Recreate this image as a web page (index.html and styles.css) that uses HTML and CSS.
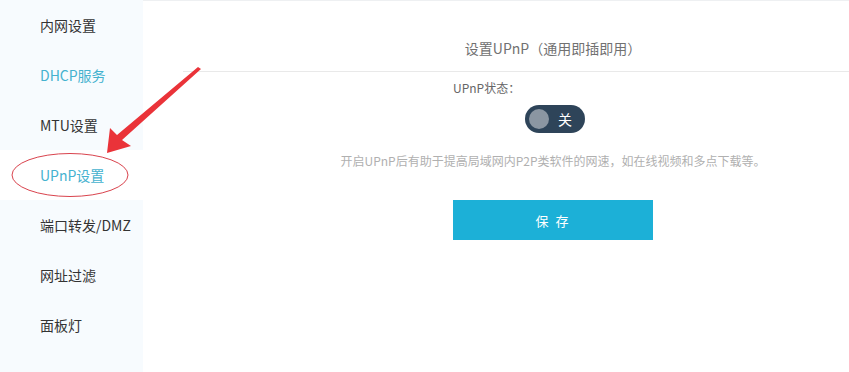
FILE: index.html
```html
<!DOCTYPE html>
<html lang="zh-CN">
<head>
<meta charset="utf-8">
<title>UPnP设置</title>
<link rel="stylesheet" href="styles.css">
</head>
<body>
<div class="page">
  <nav class="sidebar">
    <div class="nav-item">内网设置</div>
    <div class="nav-item hl">DHCP服务</div>
    <div class="nav-item">MTU设置</div>
    <div class="nav-item hl active">UPnP设置</div>
    <div class="nav-item">端口转发/DMZ</div>
    <div class="nav-item">网址过滤</div>
    <div class="nav-item">面板灯</div>
  </nav>
  <main class="main">
    <div class="content">
      <div class="header">设置UPnP（通用即插即用）</div>
      <div class="form">
        <div class="label">UPnP状态：</div>
        <div class="toggle"><span class="knob"></span><span class="toggle-text">关</span></div>
      </div>
      <div class="desc">开启UPnP后有助于提高局域网内P2P类软件的网速，如在线视频和多点下载等。</div>
      <div class="form">
        <button class="save">保 存</button>
      </div>
    </div>
  </main>
  <svg class="annot" width="849" height="372" viewBox="0 0 849 372">
    <ellipse cx="70" cy="175" rx="58" ry="21.5" fill="none" stroke="#d9434d" stroke-width="1"/>
    <polygon points="107,153 110,128 117,135 198,67 201,69 122,140 131,146" fill="#ea3339"/>
  </svg>
</div>
</body>
</html>
```
FILE: styles.css
```css
* { box-sizing: border-box; }
html, body { margin: 0; padding: 0; background: #fff; }
body {
  font-family: "Microsoft YaHei", "Noto Sans CJK SC", "Noto Sans", sans-serif;
  width: 849px;
  height: 372px;
  overflow: hidden;
}
.page {
  position: relative;
  display: flex;
  width: 849px;
  height: 372px;
  border-top: 1px solid #eef0f2;
}
.sidebar {
  width: 143px;
  flex-shrink: 0;
  background: #f7fbfe;
  margin-top: -1px;
}
.nav-item {
  height: 50px;
  line-height: 50px;
  padding-left: 40px;
  font-size: 14px;
  color: #333;
  white-space: nowrap;
}
.nav-item.hl { color: #45b2cf; }
.nav-item.active { background: #fff; }
.main {
  flex: 1;
  overflow: hidden;
  padding-left: 40px;
}
.content {
  width: 740px;
}
.header {
  padding-top: 37px;
  height: 33px;
  box-sizing: content-box;
  line-height: 20px;
  text-align: center;
  font-size: 14px;
  color: #717171;
  border-bottom: 1px solid #e9e9e9;
}
.form {
  width: 200px;
  margin: 0 auto;
}
.label {
  margin-top: 8px;
  line-height: 16px;
  font-size: 12px;
  color: #666;
}
.toggle {
  margin-top: 9px;
  margin-left: 72px;
  width: 60px;
  height: 28px;
  border-radius: 14px;
  background: #2e4459;
  display: flex;
  align-items: center;
  padding-left: 4px;
}
.knob {
  width: 20px;
  height: 20px;
  border-radius: 50%;
  background: #8b96a2;
}
.toggle-text {
  margin-left: 9px;
  color: #fff;
  font-size: 14px;
  line-height: 20px;
}
.desc {
  margin-top: 19px;
  line-height: 18px;
  text-align: center;
  font-size: 12px;
  color: #b0b0b0;
  white-space: nowrap;
}
.save {
  display: block;
  margin-top: 30px;
  width: 200px;
  height: 40px;
  border: none;
  background: #1cb0d7;
  color: #fff;
  font-family: inherit;
  font-size: 13px;
  letter-spacing: 2px;
  padding: 0;
}
.annot {
  position: absolute;
  left: 0;
  top: -1px;
  pointer-events: none;
}
```
